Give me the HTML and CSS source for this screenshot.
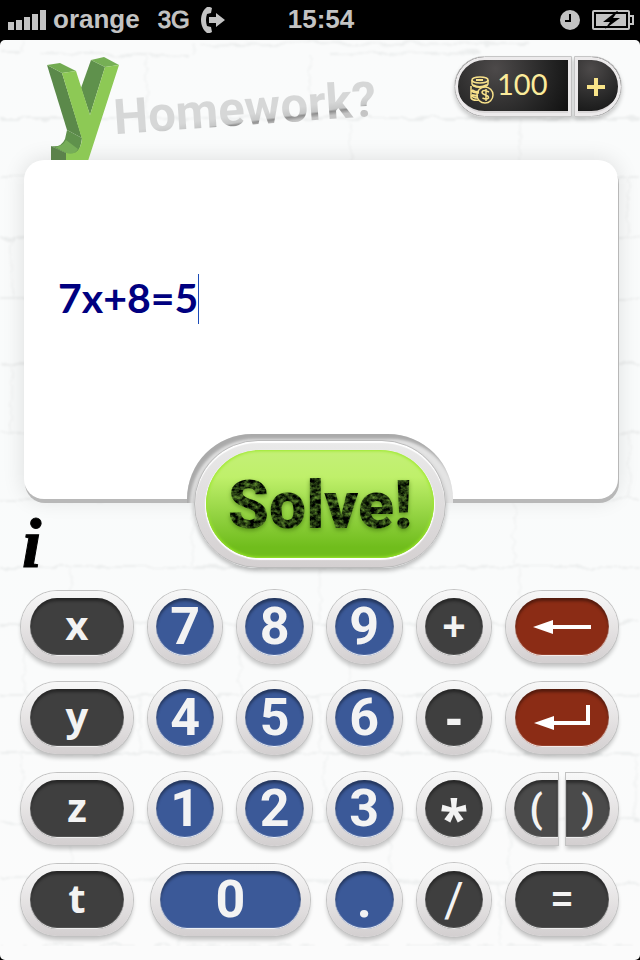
FILE: index.html
```html
<!DOCTYPE html>
<html lang="en">
<head>
<meta charset="utf-8">
<meta name="viewport" content="width=device-width, initial-scale=1">
<title>yHomework</title>
<link rel="stylesheet" href="styles.css">
</head>
<body>
<svg class="defs" width="0" height="0" aria-hidden="true">
  <filter id="grunge" x="-5%" y="-5%" width="110%" height="115%" color-interpolation-filters="sRGB">
    <feTurbulence type="fractalNoise" baseFrequency="0.19 0.24" numOctaves="3" seed="8" result="n"/>
    <feColorMatrix in="n" type="matrix" values="0.8 0 0 0 -0.27  1.1 0 0 0 -0.34  0.4 0 0 0 -0.14  0 0 0 0 1" result="c"/>
    <feComposite in="c" in2="SourceAlpha" operator="in" result="t"/>
    <feDropShadow in="t" dx="0" dy="2" stdDeviation="2" flood-color="#2c5a00" flood-opacity="0.5"/>
  </filter>
  <filter id="rough" x="0" y="0" width="100%" height="100%">
    <feTurbulence type="fractalNoise" baseFrequency="0.05 0.09" numOctaves="3" seed="4" result="n"/>
    <feDisplacementMap in="SourceGraphic" in2="n" scale="9" xChannelSelector="R" yChannelSelector="G"/>
    <feGaussianBlur stdDeviation="0.8"/>
  </filter>
</svg>

<header class="status">
  <div class="status-left">
    <svg width="38" height="20" viewBox="0 0 38 20" fill="#c3c3c3" aria-hidden="true"><path d="M0 12h6v8H0zM8 10h6v10H8zM16 7h6v13h-6zM24 4h6v16h-6zM32 0h6v20h-6z"/></svg>
    <span class="carrier">orange</span>
    <span class="network">3G</span>
    <svg width="24" height="26" viewBox="0 0 24 26" aria-hidden="true"><path fill="#c3c3c3" d="M6 0C-2 6-2 20 6 26h3l2-1-1-5-4-1Q4 13 6 7l4-1 1-5-2-1zM8 10h7V6l9 7-9 7v-4H8z"/></svg>
  </div>
  <span class="time">15:54</span>
  <div class="status-right">
    <svg width="20" height="20" viewBox="0 0 20 20" aria-hidden="true"><circle cx="10" cy="10" r="10" fill="#c3c3c3"/><path d="M10 4v7H5" fill="none" stroke="#000" stroke-width="2"/></svg>
    <svg width="42" height="20" viewBox="0 0 42 20" aria-hidden="true"><rect x="1" y="1" width="36" height="18" rx="1" fill="none" stroke="#c3c3c3" stroke-width="2"/><path d="M38 6h3v8h-3" fill="none" stroke="#c3c3c3" stroke-width="2"/><path d="M4 4h30v12H4z" fill="#c3c3c3"/><path d="m25 1-14 11h7l-5 7 15-11h-7l5-7z" fill="#000"/></svg>
  </div>
</header>

<main class="app">
  <svg class="wall" viewBox="0 0 640 920" preserveAspectRatio="xMidYMin slice" aria-hidden="true">
    <g filter="url(#rough)" fill="none" stroke="#eceeee" stroke-width="2">
      <path d="M0 12h20M40 13l150 3M200 6l110-3 220 1M330 15l150-3M0 78h640M0 137h640M0 198h640M0 259h640M0 324h640M0 393h640M0 460h640M0 527h640M0 585l640-2M0 655h640M0 713h640M0 783l640-4M0 838l640 7M0 906h640"/>
      <path stroke="#f3f4f4" d="M22 0v12M195 3v11M146 16v60M310 16v60M350 78v59M520 78v59M628 137v60M12 198v60M12 324v68M629 393v66M192 460v64M514 460v64M70 527v58M320 527v58M520 527v58M25 585v68M240 585v68M350 585v68M140 655v58M320 655v58M22 713v68M325 713v70M636 713v66M70 783v58M390 783v58M510 783v58M180 840v64M500 843v62"/>
    </g>
  </svg>

  <div class="top">
    <h1 class="brand">
      <svg class="logo-y" width="72" height="103" viewBox="47 57 72 103" role="img" aria-label="y">
        <path fill="#5b894a" d="m47 65 15 8 20 65-15-8z"/>
        <path fill="#72ab50" d="m47 65 13-2 16 8-14 2z"/>
        <path fill="#5f914c" d="m91 60 14 7-15 48-9-27z"/>
        <path fill="#76af55" d="m91 60 13-3 15 8-14 2z"/>
        <path fill="#5f914c" d="m67 130 15 8q-2 16-9 16-5 1-22-8 10 2 14-7z"/>
        <path fill="#76ad58" d="M55 147q8-1 11-7l12 9q-3 6-11 5z"/>
        <path fill="#5b824b" d="m51 146 15 7v8H51z"/>
        <path fill="#8dc955" d="m62 73 14-2 14 44 15-48 14-2-31 96H66v-8c11 3 15-5 16-14z"/>
      </svg>
      <span class="brand-text">Homework?</span>
    </h1>
    <div class="coins">
      <div class="half half-left">
        <svg width="25" height="28" viewBox="0 0 25 28" fill="none" stroke="#f7e08a" stroke-width="1.5" aria-hidden="true"><ellipse cx="11" cy="4" rx="8" ry="3"/><path d="M3 4v4c1 4 15 4 16 0V4M2 10v4c1 3 5 3 8 3M2 14v5q2 3 7 3M2 19v3q2 3 8 2"/><path stroke-width="2" d="M4 9q6 4 14 0M3 14q3 2 7 2M3 19l6 1M7 4h7"/><circle cx="16" cy="19" r="8"/><path d="M20 16q-6-3-7 0 0 2 3.500 3t3 3q-2 2-6 0M17 13v12"/></svg>
        <span>100</span>
      </div>
      <button class="half half-right" aria-label="Add coins"><svg width="20" height="20" viewBox="0 0 20 20" aria-hidden="true"><path d="M8 1h4v7h7v4h-7v7H8v-7H1V8h7z" fill="#f8e489"/></svg></button>
    </div>
  </div>

  <section class="sheet">
    <input class="equation" type="text" value="7x+8=5" aria-label="Equation"><span class="caret"></span>
  </section>

  <div class="actions">
    <button class="info" aria-label="Information">i</button>
    <div class="notch"><button class="solve"><span class="face"><span class="grunge">Solve!</span></span></button></div>
  </div>

  <div class="keypad">
    <button class="key wide letter">x</button>
    <button class="key digit">7</button>
    <button class="key digit">8</button>
    <button class="key digit">9</button>
    <button class="key plus">+</button>
    <button class="key wide red" aria-label="Delete"><svg width="58" height="16" viewBox="0 0 58 16" aria-hidden="true"><path fill="#fff" d="m0 8 20-7v5h38v4H20v5z"/></svg></button>

    <button class="key wide letter">y</button>
    <button class="key digit">4</button>
    <button class="key digit">5</button>
    <button class="key digit">6</button>
    <button class="key minus">-</button>
    <button class="key wide red" aria-label="Enter"><svg width="56" height="26" viewBox="0 0 56 26" aria-hidden="true"><path fill="#fff" d="m0 18 20-7v5h32V0h4v20H20v5z"/></svg></button>

    <button class="key wide letter">z</button>
    <button class="key digit">1</button>
    <button class="key digit">2</button>
    <button class="key digit">3</button>
    <button class="key star">*</button>
    <div class="pair">
      <button class="key paren open">(</button>
      <button class="key paren close">)</button>
    </div>

    <button class="key wide letter">t</button>
    <button class="key wide digit zero">0</button>
    <button class="key digit">.</button>
    <button class="key slash">/</button>
    <button class="key wide equals">=</button>
  </div>
</main>
</body>
</html>
```
FILE: styles.css
```css
* { box-sizing: border-box; }

body {
  margin: 0;
  background: #000;
  font-family: "Liberation Sans", Arial, sans-serif;
}

button, input {
  margin: 0;
  padding: 0;
  border: 0;
  background: none;
  font: inherit;
  color: inherit;
}

button { cursor: pointer; }
svg { display: block; flex: none; }
.defs { position: absolute; }

/* status bar */
.status {
  display: grid;
  grid-template-columns: 1fr auto 1fr;
  align-items: center;
  height: 40px;
  padding: 0 6px 1px 8px;
  color: #c3c3c3;
  font-size: 26px;
  font-weight: bold;
}
.status-left, .status-right { display: flex; align-items: center; }
.status-left { gap: 7px; }
.status-right { justify-content: flex-end; gap: 12px; }
.network {
  margin: 0 4px 0 11px;
  font-size: 24px;
  font-weight: normal;
  -webkit-text-stroke: 1px #c3c3c3;
}

/* page */
.app {
  position: relative;
  isolation: isolate;
  overflow: hidden;
  min-height: calc(100vh - 40px);
  padding-bottom: 21px;
  border-radius: 5px;
  background: linear-gradient(#fafbfb, #f9fbfb 40%, #fbfbfb);
}
.wall {
  position: absolute;
  inset: 0;
  z-index: -1;
  width: 100%;
  height: 100%;
}

.top {
  display: flex;
  justify-content: space-between;
  align-items: flex-start;
  height: 120px;
  padding: 16px 18px 0 47px;
}
.brand {
  display: flex;
  margin: 0;
  padding-top: 1px;
}
.brand-text {
  margin: 22px 0 0 -5px;
  font: bold 49px/60px Roboto, sans-serif;
  color: transparent;
  background: linear-gradient(176deg, #d6d7d7 45%, #c6c7c7 52%, #8e8e8e 54%, #c4c4c4 58%, #d2d3d3);
  background-clip: text;
  -webkit-background-clip: text;
  transform: rotate(-4deg);
}

.coins { display: flex; gap: 2px; }
.half {
  display: flex;
  align-items: center;
  height: 61px;
  border: 1px solid #c6c6c6;
  background: radial-gradient(circle at 35% 20%, #4d4a4a, #252525 60%, #0d0d0d);
  box-shadow: 0 3px 4px rgba(0, 0, 0, .2), inset 0 0 0 3px #eceaeb, inset 0 -5px 0 #dad7d8;
  color: #fbeb9b;
  font: 29px/36px Lato, sans-serif;
}
.half-left {
  gap: 3px;
  width: 118px;
  padding-left: 14px;
  border-radius: 31px 0 0 31px;
}
.half-left svg { margin-top: 6px; }
.half-left span { margin-bottom: 5px; }
.half-right {
  justify-content: center;
  width: 48px;
  padding-right: 4px;
  border-radius: 0 31px 31px 0;
}

.sheet {
  display: flex;
  align-items: flex-start;
  min-height: 339px;
  margin: 0 22px 0 24px;
  padding: 113px 34px 0;
  border-radius: 20px;
  background: #fff;
  box-shadow: 1px 4px 0 #b8b8b8, 0 0 22px rgba(0, 0, 0, .12);
}
.equation {
  field-sizing: content;
  height: 50px;
  color: #000080;
  font: bold 41px/50px Lato, sans-serif;
  outline: 0;
}
.caret { width: 1px; height: 50px; margin-top: 1px; background: #1b4bb8; }

.actions {
  position: relative;
  display: grid;
  grid-template-columns: 1fr auto 1fr;
  margin-top: -65px;
  margin-bottom: 22px;
}
.info {
  align-self: end;
  justify-self: start;
  margin-left: 22px;
  color: #000;
  font: italic bold 70px/48px "Liberation Serif", serif;
  -webkit-text-stroke: 1px #000;
}
.notch {
  position: relative;
  padding: 6px 7px 0;
}
.notch::before {
  content: "";
  position: absolute;
  inset: 0 0 auto;
  height: 69px;
  border-radius: 65px 65px 0 0;
  background: #e4e4e4;
  box-shadow: inset 3px 5px 3px #aaa;
}
.solve {
  position: relative;
  display: block;
  padding: 9px 11px;
  border: 1px solid #bbb;
  border-radius: 64px;
  background: linear-gradient(#eaeaea, #d4d0d1);
  box-shadow: inset 0 2px 1px #fff, 0 3px 4px rgba(0, 0, 0, .25);
}
.face {
  display: grid;
  place-items: center;
  width: 228px;
  height: 108px;
  border-radius: 54px;
  background: linear-gradient(#c4f078, #bff06a 25%, #8dcf3c 65%, #70bd1c 90%);
  box-shadow: 0 1px 1px 1px #fff, inset 0 0 3px 1px #9be82a;
}
.grunge {
  font: 900 66px/112px Roboto, sans-serif;
  filter: url(#grunge);
}

/* keypad */
.keypad {
  display: grid;
  grid-template-columns: 3fr 2fr 2fr 2fr 2fr 3fr;
  align-items: center;
  gap: 17px 15px;
  padding: 0 22px 0 21px;
}
.key {
  display: grid;
  place-items: center;
  height: 74px;
  border: 8px solid transparent;
  border-radius: 37px;
  background:
    linear-gradient(#3f3f3f, #3f3f3f) padding-box,
    linear-gradient(#f8f8f8, #d3cfd0) border-box;
  box-shadow:
    0 0 0 1px #c2c2c2,
    0 4px 4px rgba(0, 0, 0, .22),
    inset 0 -1px 1px 0 #fff,
    inset 0 3px 3px rgba(0, 0, 0, .4);
  color: #f3f3f3;
  line-height: 56px;
}
.key.wide { height: 72px; border-width: 7px 9px; }
.key.digit {
  background:
    linear-gradient(#3b5998, #3b5998) padding-box,
    linear-gradient(#f8f8f8, #d3cfd0) border-box;
  font: bold 52px/58px Roboto, sans-serif;
}
.key.letter { padding-bottom: 4px; font: bold 40px/54px "Open Sans", sans-serif; }
.key.zero { grid-column: span 2; margin: 0 2px 0 3px; }
.key.red {
  background:
    linear-gradient(#8b2c15, #8b2c15) padding-box,
    linear-gradient(#f8f8f8, #d3cfd0) border-box;
}
.plus, .minus { padding-bottom: 4px; font-size: 40px; font-weight: bold; }
.minus { font-size: 52px; }
.star { font: bold 52px/76px "Open Sans", sans-serif; }
.slash { font: 48px/56px Roboto, sans-serif; }
.equals { font-size: 36px; font-weight: bold; }

.pair { display: grid; grid-template-columns: 1fr 1fr; gap: 8px; }
.key.paren {
  height: 72px;
  border-width: 7px 0 7px 8px;
  border-radius: 37px 0 0 37px;
  background:
    linear-gradient(#4a4a4a, #4a4a4a) padding-box,
    linear-gradient(#f8f8f8, #d3cfd0) border-box;
  font: bold 38px/54px Roboto, sans-serif;
}
.key.paren.close { border-width: 7px 8px 7px 0; border-radius: 0 37px 37px 0; }
```
